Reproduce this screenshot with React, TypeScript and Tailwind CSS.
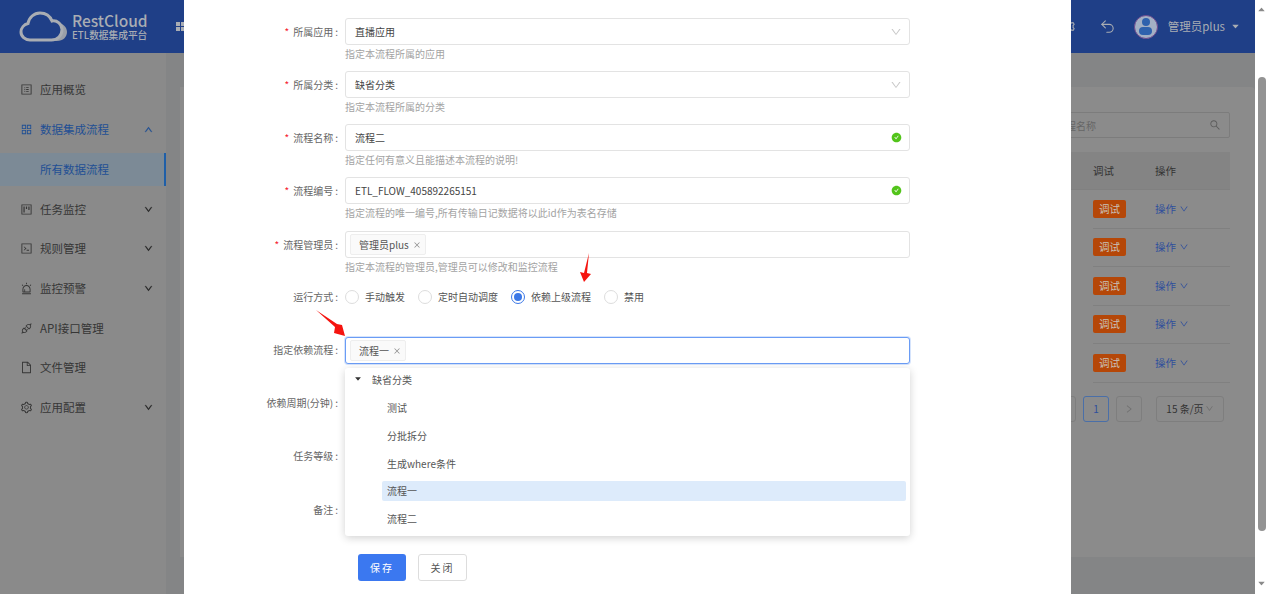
import type { ReactNode } from "react";
import { Undo2 } from "lucide-react";
import {
  AiFillCaretDown,
  AiFillCheckCircle,
  AiFillCaretUp,
  AiOutlineAlert,
  AiOutlineApi,
  AiOutlineAppstore,
  AiOutlineClose,
  AiOutlineCode,
  AiOutlineDown,
  AiOutlineFile,
  AiOutlineProfile,
  AiOutlineProject,
  AiOutlineRight,
  AiOutlineSearch,
  AiOutlineSetting,
  AiOutlineUp,
} from "react-icons/ai";

const menu = [
  { label: "应用概览", icon: <AiOutlineProfile /> },
  { label: "数据集成流程", icon: <AiOutlineAppstore />, open: true },
  { label: "任务监控", icon: <AiOutlineProject />, arrow: true },
  { label: "规则管理", icon: <AiOutlineCode />, arrow: true },
  { label: "监控预警", icon: <AiOutlineAlert />, arrow: true },
  { label: "API接口管理", icon: <AiOutlineApi /> },
  { label: "文件管理", icon: <AiOutlineFile /> },
  { label: "应用配置", icon: <AiOutlineSetting />, arrow: true },
];

const Logo = () => (
  <svg width="50" height="32" viewBox="0 0 50 32" fill="none">
    <path d="M38 12c6 0 10 4 10 9s-4 9-10 9H26c6-2 12-8 12-18z" fill="#9a9fa8" />
    <path
      d="M11 29C6 29 2 25.500 2 21c0-4 3-7.500 7-8.500C10 6.500 15 2 21 2c6 0 10 3 12 8 5-1 10 3 10 8.500 0 6-4.500 10.500-10.500 10.500z"
      stroke="#a9adb3"
      strokeWidth="3"
      fill="#1f3f87"
    />
  </svg>
);

const Sidebar = () => (
  <aside className="w-[166px] shrink-0 bg-[#8a8a8a] pt-[17px]">
    {menu.map((m) => (
      <div key={m.label}>
        <div
          className={`flex h-[39.700px] items-center pl-[20px] pr-[13px] text-[11.500px] ${
            m.open ? "text-[#1f4f94]" : "text-[#363636]"
          }`}
        >
          <span className="mr-[7px] text-[13px]">{m.icon}</span>
          <span className="flex-1">{m.label}</span>
          {m.open && <AiOutlineUp className="text-[9px]" stroke="currentColor" strokeWidth={50} />}
          {m.arrow && <AiOutlineDown className="text-[9px] text-[#222222]" stroke="currentColor" strokeWidth={50} />}
        </div>
        {m.open && (
          <div className="mb-[3px] mt-[4px] flex h-[33px] items-center border-r-[2px] border-[#1f5fa8] bg-[#7c8a96] pl-[40px] text-[11.500px] text-[#1f4f94]">
            所有数据流程
          </div>
        )}
      </div>
    ))}
  </aside>
);

const TableRow = () => (
  <div className="flex h-[38.500px] items-center border-b border-[#808080] text-[10.500px]">
    <span className="flex h-[18px] w-[33px] items-center justify-center rounded-[2px] bg-[#b54708] text-[#c9c0b8]">
      调试
    </span>
    <span className="ml-[29px] flex items-center gap-[3px] text-[#2f4f9c]">
      操作 <AiOutlineDown className="text-[10px]" />
    </span>
  </div>
);

const Background = () => (
  <div className="flex h-full w-[1255px] flex-col">
    <header className="flex h-[53px] items-center bg-[#1f3f87] pl-[19px] pr-[15px]">
      <Logo />
      <div className="mb-[1px] ml-[3px] w-[90px] text-[#a9adb3]">
        <div className="text-[15.500px] font-medium leading-[17px]">RestCloud</div>
        <div className="text-[9.700px] font-medium leading-[12px]">ETL数据集成平台</div>
      </div>
      <div className="ml-[14px] grid grid-cols-2 gap-[1px]">
        <span className="size-[4px] bg-[#a9adb3]" />
        <span className="size-[4px] bg-[#a9adb3]" />
        <span className="size-[4px] bg-[#a9adb3]" />
        <span className="size-[4px] bg-[#a9adb3]" />
      </div>
      <AiOutlineSetting className="ml-auto text-[15px] text-[#a9adb3]" />
      <Undo2 className="ml-[23px] text-[#a9adb3]" size={17} strokeWidth={1.5} />
      <div className="ml-[18px] flex size-[24px] flex-col items-center justify-center rounded-full border border-[#6f4a8f] bg-[#a3b0c4]">
        <span className="size-[8px] rounded-full bg-[#2f62ad]" />
        <span className="mt-[1px] h-[8px] w-[13px] rounded-full bg-[#2f62ad]" />
      </div>
      <span className="ml-[10px] text-[11.500px] text-[#a9adb3]">管理员plus</span>
      <AiFillCaretDown className="ml-[6px] text-[9px] text-[#a9adb3]" />
    </header>
    <div className="flex min-h-0 flex-1">
      <Sidebar />
      <main className="flex flex-1 flex-col bg-[#848586] pt-[34px]">
        <div className="ml-[14px] h-[470px] rounded-tr-[4px] bg-[#8b8b8b] pl-[24px] pr-[25px] pt-[25px]">
          <div className="flex h-[26px] items-center justify-end rounded-[2px] border border-[#7c7c7c] pr-[8px] text-[#5c5c5c]">
            <span className="mr-[113px] text-[10px] text-[#666666]">输入流程名称</span>
            <AiOutlineSearch className="text-[12px]" />
          </div>
          <div className="mt-[14px] flex h-[38px] items-center border-b border-[#808080] bg-[#848484] pl-[889px] text-[10.500px] text-[#333333]">
            <span className="w-[62px]">调试</span>
            <span>操作</span>
          </div>
          {[0, 1, 2, 3, 4].map((i) => (
            <div key={i} className="pl-[889px]">
              <TableRow />
            </div>
          ))}
          <div className="mt-[13px] flex h-[26px] items-center justify-end gap-[7px] pr-[6px] text-[10px]">
            <span className="flex size-[26px] items-center justify-center rounded-[3px] border border-[#7e7e7e] text-[#777777]" />
            <span className="flex size-[26px] items-center justify-center rounded-[3px] border border-[#4a6fa8] text-[#2f4f9c]">
              1
            </span>
            <span className="flex size-[26px] items-center justify-center rounded-[3px] border border-[#7e7e7e] text-[#6f6f6f]">
              <AiOutlineRight className="text-[10px]" />
            </span>
            <span className="ml-[7px] flex h-[26px] w-[68px] items-center justify-center gap-[1px] rounded-[3px] border border-[#7e7e7e] text-[#333333]">
              15 条/页 <AiOutlineDown className="text-[9px] text-[#6f6f6f]" />
            </span>
          </div>
        </div>
      </main>
    </div>
  </div>
);

const Label = ({ text, required, top = "pt-[6px]" }: { text: string; required?: boolean; top?: string }) => (
  <label className={`w-[155px] shrink-0 text-right text-[10px] leading-[15px] text-[#666666] ${top}`}>
    {required && <span className="mr-[4px] text-[#f5222d]">*</span>}
    {text}
    <span className="ml-[2px] mr-[1px]">:</span>
  </label>
);

const FormRow = ({
  label,
  required,
  hint,
  children,
  height = "h-[53px]",
  top,
}: {
  label: string;
  required?: boolean;
  hint?: string;
  children?: ReactNode;
  height?: string;
  top?: string;
}) => (
  <div className={`flex ${height}`}>
    <Label text={label} required={required} top={top} />
    <div className="ml-[6px] w-[565px]">
      {children}
      {hint && <div className="mt-[1px] text-[10px] leading-[15px] text-[#a3a3a3]">{hint}</div>}
    </div>
  </div>
);

const Box = ({
  children,
  right,
  focus,
}: {
  children: ReactNode;
  right?: ReactNode;
  focus?: boolean;
}) => (
  <div
    className={`flex h-[27px] items-center rounded-[3px] border bg-white text-[10px] text-[#444444] ${
      focus ? "border-[#6a9cf5] shadow-[0_0_0_1px_#d6e4fc]" : "border-[#e3e3e3]"
    }`}
  >
    <div className="flex-1">{children}</div>
    {right && <span className="mr-[7px] flex items-center">{right}</span>}
  </div>
);

const Tag = ({ text }: { text: string }) => (
  <span className="ml-[4px] inline-flex h-[21px] items-center gap-[4px] rounded-[2px] border border-[#eeeeee] bg-[#fafafa] pl-[8px] pr-[4px] text-[10px] text-[#555555]">
    {text}
    <AiOutlineClose className="text-[8px] text-[#888888]" />
  </span>
);

const Radio = ({ text, checked }: { text: string; checked?: boolean }) => (
  <span className="mr-[13px] flex items-center gap-[6px] text-[10px] text-[#555555]">
    <span
      className={`flex size-[14px] items-center justify-center rounded-full border bg-white ${
        checked ? "border-[#3b78e7]" : "border-[#dddddd]"
      }`}
    >
      {checked && <span className="size-[8px] rounded-full bg-[#3b78e7]" />}
    </span>
    {text}
  </span>
);

const Arrow = ({ className, points, w, h }: { className: string; points: string; w: number; h: number }) => (
  <svg className={`absolute ${className}`} width={w} height={h} viewBox={`0 0 ${w} ${h}`}>
    <polygon points={points} fill="#f5140f" />
  </svg>
);

const Dropdown = () => (
  <div className="absolute left-[161px] top-[368px] h-[168px] w-[565px] rounded-[3px] bg-white pt-[2px] text-[10px] text-[#555555] shadow-[0_2px_8px_rgba(0,0,0,0.18)]">
    <div className="flex h-[18px] items-center pl-[9px]">
      <AiFillCaretDown className="mr-[10px] text-[8px] text-[#333333]" />
      缺省分类
    </div>
    <div className="mt-[10px] flex flex-col gap-[8px] pl-[37px] pr-[4px]">
      {["测试", "分批拆分", "生成where条件", "流程一", "流程二"].map((t) => (
        <div
          key={t}
          className={`flex h-[19.700px] items-center rounded-[2px] pl-[5px] ${t === "流程一" ? "bg-[#ddebfb]" : ""}`}
        >
          {t}
        </div>
      ))}
    </div>
  </div>
);

const Modal = () => (
  <div className="absolute inset-y-0 left-[184px] w-[887px] bg-white pt-[18px]">
    <FormRow label="所属应用" required hint="指定本流程所属的应用">
      <Box right={<AiOutlineDown className="text-[12px] text-[#c8c8c8]" />}>
        <span className="pl-[9px]">直播应用</span>
      </Box>
    </FormRow>
    <FormRow label="所属分类" required hint="指定本流程所属的分类">
      <Box right={<AiOutlineDown className="text-[12px] text-[#c8c8c8]" />}>
        <span className="pl-[9px]">缺省分类</span>
      </Box>
    </FormRow>
    <FormRow label="流程名称" required hint="指定任何有意义且能描述本流程的说明!">
      <Box right={<AiFillCheckCircle className="text-[11px] text-[#52c41a]" />}>
        <span className="pl-[9px]">流程二</span>
      </Box>
    </FormRow>
    <FormRow label="流程编号" required hint="指定流程的唯一编号,所有传输日记数据将以此id作为表名存储" height="h-[54px]">
      <Box right={<AiFillCheckCircle className="text-[11px] text-[#52c41a]" />}>
        <span className="pl-[9px]">ETL_FLOW_405892265151</span>
      </Box>
    </FormRow>
    <FormRow label="流程管理员" required hint="指定本流程的管理员,管理员可以修改和监控流程" height="h-[53px]">
      <Box>
        <Tag text="管理员plus" />
      </Box>
    </FormRow>
    <div className="flex h-[53px] items-start">
      <div className="flex h-[25px] items-center">
        <Label text="运行方式" top="pt-0" />
        <div className="ml-[6px] flex items-center">
          <Radio text="手动触发" />
          <Radio text="定时自动调度" />
          <Radio text="依赖上级流程" checked />
          <Radio text="禁用" />
        </div>
      </div>
    </div>
    <FormRow label="指定依赖流程" top="pt-[5px]">
      <Box focus>
        <Tag text="流程一" />
      </Box>
    </FormRow>
    <FormRow label="依赖周期(分钟)" top="pt-[5px]" />
    <FormRow label="任务等级" top="pt-[5px]" />
    <FormRow label="备注" height="h-[58px]" />
    <div className="flex gap-[12px] pl-[174px]">
      <button className="h-[27px] w-[48px] rounded-[3px] bg-[#3b78f0] text-[10px] tracking-[2px] text-white">
        保存
      </button>
      <button className="h-[27px] w-[49px] rounded-[3px] border border-[#dddddd] bg-white text-[10px] tracking-[2px] text-[#555555]">
        关闭
      </button>
    </div>
    <Dropdown />
    <Arrow className="left-[132px] top-[310px]" w={30} h={27} points="0,0 21,14 26,15 29,26 18,23 19,17" />
    <Arrow className="left-[396px] top-[253px]" w={12} h={30} points="9,0 7,20 11,21 4,29 0,19 4,20" />
  </div>
);

const Scrollbar = () => (
  <div className="flex w-[13px] shrink-0 flex-col items-center bg-white">
    <AiFillCaretUp className="mt-[5px] text-[9px] text-[#8a8a8a]" />
    <div className="mt-[63px] h-[454px] w-[8px] rounded-full bg-[#939393]" />
    <AiFillCaretDown className="mb-[6px] mt-auto text-[9px] text-[#8a8a8a]" />
  </div>
);

export default function App() {
  return (
    <div className="relative flex h-[594px] w-[1268px] overflow-hidden bg-white font-['Noto_Sans_CJK_SC','Noto_Sans',sans-serif]">
      <Background />
      <Scrollbar />
      <Modal />
    </div>
  );
}
